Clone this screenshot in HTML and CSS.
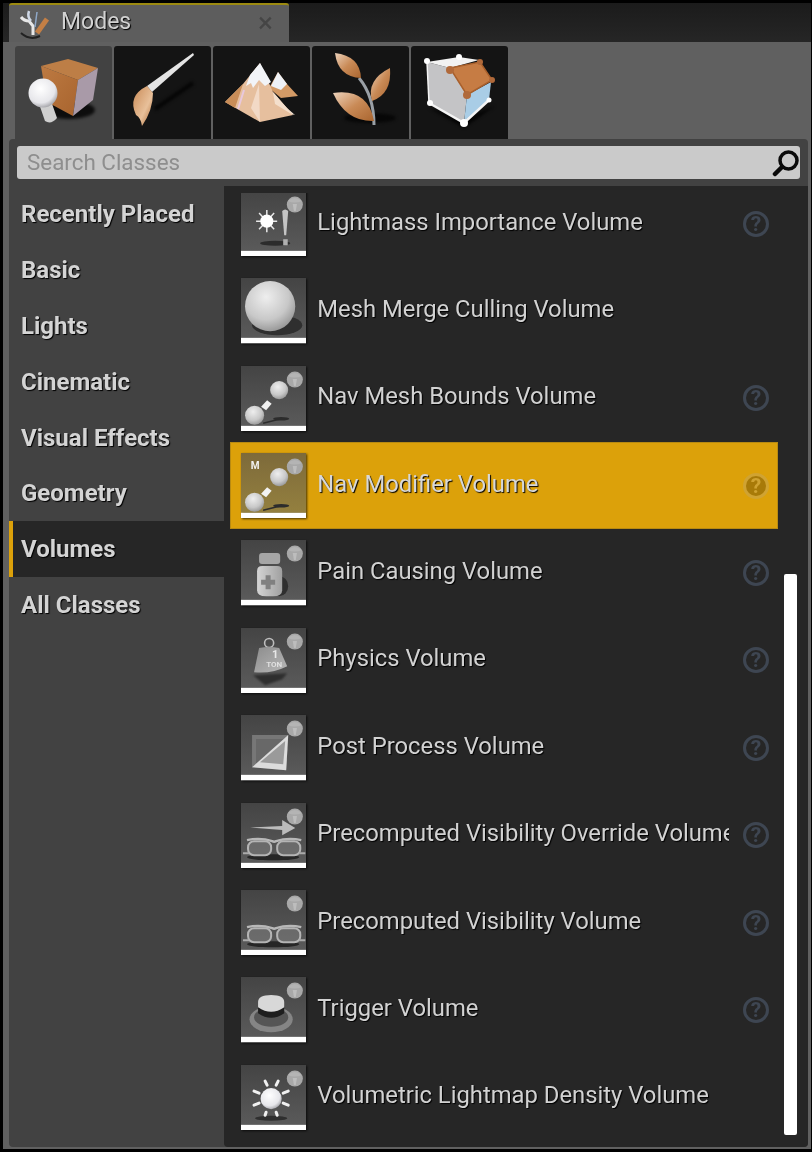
FILE: index.html
```html
<!DOCTYPE html>
<html lang="en">
<head>
<meta charset="utf-8">
<title>Modes</title>
<link rel="stylesheet" href="styles.css">
</head>
<body>
<svg class="defs" width="0" height="0" aria-hidden="true">
  <defs>
    <linearGradient id="thumb" x1="0" y1="0" x2="0" y2="1"><stop offset="0" stop-color="#444"/><stop offset="1" stop-color="#5a5a5a"/></linearGradient>
    <linearGradient id="thumbSel" x1="0" y1="0" x2="0" y2="1"><stop offset="0" stop-color="#7d6a3a"/><stop offset="1" stop-color="#94803f"/></linearGradient>
    <radialGradient id="ball" cx=".42" cy=".32" r=".75"><stop offset="0" stop-color="#eeeeee"/><stop offset=".6" stop-color="#c8c8c8"/><stop offset="1" stop-color="#8d8d8d"/></radialGradient>
    <radialGradient id="white" cx=".42" cy=".35" r=".7"><stop offset="0" stop-color="#fff"/><stop offset=".7" stop-color="#e6e6ea"/><stop offset="1" stop-color="#9a9a9f"/></radialGradient>
    <linearGradient id="leaf" x1="0" y1="0" x2="1" y2="1"><stop offset="0" stop-color="#ecd2bb"/><stop offset=".5" stop-color="#c98a56"/><stop offset="1" stop-color="#a9652f"/></linearGradient>
    <linearGradient id="bristle" x1="0" y1="0" x2="1" y2="1"><stop offset="0" stop-color="#c98a56"/><stop offset=".6" stop-color="#e8c09a"/><stop offset="1" stop-color="#a9652f"/></linearGradient>
    <linearGradient id="cubeFront" x1="0" y1="0" x2="1" y2="1"><stop offset="0" stop-color="#bd7a42"/><stop offset="1" stop-color="#a8642e"/></linearGradient>
    <linearGradient id="bottle" x1="0" y1="0" x2="1" y2="0"><stop offset="0" stop-color="#d4d4d4"/><stop offset="1" stop-color="#a0a0a0"/></linearGradient>
    <linearGradient id="weight" x1="0" y1="0" x2="1" y2="1"><stop offset="0" stop-color="#8c8c8c"/><stop offset="1" stop-color="#b8b8b8"/></linearGradient>
    <symbol id="gem" viewBox="0 0 65 65">
      <circle cx="53.600" cy="13.500" r="8" fill="#a8a8a8"/>
      <path d="M46.500 10 Q53.600 4 60.500 10 Q53.600 13 46.500 10 Z" fill="#b4b4b4"/>
      <path d="M51.500 13 H55.700 L54.500 20 H52.700 Z" fill="#bdbdbd"/>
    </symbol>
    <symbol id="glasses" viewBox="0 0 65 65">
      <ellipse cx="32" cy="54" rx="26" ry="3" fill="#262626"/>
      <path d="M6 37 Q19 34 31 38 Q33 39 35 38 Q47 34 60 37" fill="none" stroke="#b8b8b8" stroke-width="2.400"/>
      <rect x="7" y="38" width="23" height="14" rx="6" fill="#7a7a7a" fill-opacity=".6" stroke="#b4b4b4" stroke-width="2"/>
      <rect x="36" y="38" width="23" height="14" rx="6" fill="#7a7a7a" fill-opacity=".6" stroke="#b4b4b4" stroke-width="2"/>
      <path d="M2 50 H8 M58 50 H64" stroke="#aaa" stroke-width="2"/>
    </symbol>
    <symbol id="nav" viewBox="0 0 65 65">
      <path d="M22 57 L38 53" stroke="#2c2c2c" stroke-width="1.500"/>
      <ellipse cx="40" cy="52.500" rx="8" ry="1.700" fill="#2c2c2c"/>
      <path d="M20 40.500 L26 34 L30.500 37.500 L25 44 Z" fill="#f2f2f2"/>
      <circle cx="38" cy="24" r="9" fill="url(#ball)"/>
      <circle cx="13.500" cy="49" r="9.500" fill="url(#ball)"/>
    </symbol>
  </defs>
</svg>

<main class="frame">
  <header class="tabstrip">
    <div class="doc-tab">
      <svg class="doc-icon" viewBox="0 0 32 30">
        <path d="M3 8 Q6 12 11 12 L15 17 L15 26" fill="none" stroke="#e8e8e8" stroke-width="3"/>
        <path d="M11 2 Q9 8 13 12" fill="none" stroke="#cfd8e6" stroke-width="2.500"/>
        <path d="M19 24 L29 10" stroke="#c47f45" stroke-width="5"/>
        <path d="M19 3 L17 18" stroke="#8fa8c8" stroke-width="1.500"/>
        <path d="M3 24 Q12 32 22 27" fill="none" stroke="#222" stroke-width="2"/>
      </svg>
      <span class="doc-title">Modes</span>
      <span class="doc-close">×</span>
    </div>
  </header>

  <nav class="modes">
    <div class="mode mode-on">
      <svg class="mode-icon" viewBox="0 0 96 92">
        <ellipse class="soft" cx="54" cy="64" rx="26" ry="9" fill="#0d0d0d"/>
        <path d="M26 20 L53 13 L83 22 L63 34 Z" fill="#bd7e46"/>
        <path d="M26 20 L63 34 L58 70 L32 56 Z" fill="url(#cubeFront)"/>
        <path d="M63 34 L83 22 L78 54 L58 70 Z" fill="#a99aa8"/>
        <path d="M22 52 L35 52 L42 72 Q36 79 30 75 Z" fill="#cfcfcf"/>
        <circle cx="28" cy="47" r="14.500" fill="url(#white)"/>
      </svg>
    </div>
    <div class="mode">
      <svg class="mode-icon" viewBox="0 0 96 92">
        <path class="soft" d="M79 37 L41 63" stroke="#050505" stroke-width="4"/>
        <path d="M79 7 L80 9 L38 46 L33 40 Z" fill="#e4e4e4"/>
        <path d="M33 40 L39 47 Q39 64 28 80 Q27 72 22 69 Q13 50 33 40 Z" fill="url(#bristle)"/>
      </svg>
    </div>
    <div class="mode">
      <svg class="mode-icon" viewBox="0 0 96 92">
        <path d="M65 26 L74 38 L85 50 L68 52 L56 42 Z" fill="#d39a66"/>
        <path d="M65 26 L74 38 L68 44 L58 40 Z" fill="#eef1f6"/>
        <path d="M60 50 L82 69 L64 64 Z" fill="#f4e6d8"/>
        <path d="M30 38 L47 17 L60 46 L80 69 L47 76 L12 56 Z" fill="#e6bf9e"/>
        <path d="M47 17 L37 29 L33 40 L38 37 L40 42 L46 34 L52 40 L58 36 Z" fill="#f2f4f8"/>
        <path d="M12 56 L30 38 L22 62 Z" fill="#c98d58"/>
        <path d="M60 46 L80 69 L62 58 Z" fill="#f4dfcc"/>
        <path d="M25 63 L31 44" stroke="#e8c8dc" stroke-width="2"/>
        <path d="M47 76 L46 38 L38 62 Z" fill="#f2d9c6"/>
      </svg>
    </div>
    <div class="mode">
      <svg class="mode-icon" viewBox="0 0 96 92">
        <ellipse class="soft" cx="58" cy="72" rx="26" ry="5" fill="#070707"/>
        <path d="M47 32 Q62 50 62 79" fill="none" stroke="#9aa0a6" stroke-width="3"/>
        <path d="M23 7 Q48 10 49 32 Q26 31 23 7 Z" fill="url(#leaf)"/>
        <path d="M78 22 Q80 48 60 55 Q54 34 78 22 Z" fill="url(#leaf)"/>
        <path d="M21 47 Q56 42 62 75 Q34 76 21 47 Z" fill="url(#leaf)"/>
      </svg>
    </div>
    <div class="mode">
      <svg class="mode-icon" viewBox="0 0 96 92">
        <path class="soft" d="M18 62 L53 82 L84 60 L53 72 Z" fill="#050505"/>
        <path d="M16 16 L39 22 L56 49 L53 77 L18 57 Z" fill="#c4c4c6"/>
        <path d="M56 49 L80 36 L78 54 L53 77 Z" fill="#a9cde6"/>
        <path d="M16 16 L48 11 L68 14 L39 22 Z" fill="#f2f2f2"/>
        <path d="M39 22 L69 16 L81 34 L56 49 Z" fill="#c67c44" stroke="#a9602c" stroke-width="1.500"/>
        <path d="M18 57 L53 77 L78 54" fill="none" stroke="#f4f4f4" stroke-width="2.500"/>
        <path d="M16 16 L18 57" stroke="#f4f4f4" stroke-width="1.500"/>
        <circle cx="39" cy="24" r="4" fill="#b0693a"/><circle cx="69" cy="16" r="3" fill="#b0693a"/><circle cx="81" cy="34" r="3" fill="#b0693a"/><circle cx="56" cy="49" r="4" fill="#b0693a"/>
        <circle cx="16" cy="15" r="3" fill="#fff"/><circle cx="48" cy="11" r="3" fill="#fff"/><circle cx="19" cy="57" r="3" fill="#fff"/><circle cx="53" cy="77" r="4" fill="#fff"/><circle cx="78" cy="54" r="2.500" fill="#fff"/>
      </svg>
    </div>
  </nav>

  <section class="panel">
    <div class="searchrow">
      <div class="search">
        <span class="search-text">Search Classes</span>
        <svg class="search-icon" viewBox="0 0 28 28">
          <circle cx="16.500" cy="11.500" r="8.500" fill="none" stroke="#0a0a0a" stroke-width="3.500"/>
          <path d="M10 18 L3 25" stroke="#0a0a0a" stroke-width="4.500" stroke-linecap="round"/>
        </svg>
      </div>
    </div>
    <div class="browser">
      <aside class="cats">
        <div class="cat">Recently Placed</div>
        <div class="cat">Basic</div>
        <div class="cat">Lights</div>
        <div class="cat">Cinematic</div>
        <div class="cat">Visual Effects</div>
        <div class="cat">Geometry</div>
        <div class="cat cat-on">Volumes</div>
        <div class="cat">All Classes</div>
      </aside>
      <div class="list">
        <div class="scroller">
          <div class="rows">
            <div class="row">
              <svg class="thumb" viewBox="0 0 65 65"><rect width="65" height="59.500" fill="url(#thumb)"/><rect y="59.500" width="65" height="5.500" fill="#fff"/>
                <ellipse cx="34" cy="52" rx="15" ry="2.500" fill="#2c2c2c"/>
                <g stroke="#e8e8e8" stroke-width="1.500"><path d="M25.700 19 V41 M15 30 H36 M18 22 L33 38 M33 22 L18 38"/></g>
                <circle cx="25.700" cy="30" r="6.500" fill="#fff"/>
                <path d="M41 20 Q44 17 47 20 L45 44 H43 Z" fill="#c4c4c4"/><rect x="42" y="48" width="4.500" height="6" fill="#b0b0b0"/>
                <use href="#gem" width="65" height="65"/></svg>
              <span class="name">Lightmass Importance Volume</span><span class="help">?</span>
            </div>
            <div class="row">
              <svg class="thumb" viewBox="0 0 65 65"><rect width="65" height="59.500" fill="url(#thumb)"/><rect y="59.500" width="65" height="5.500" fill="#fff"/>
                <ellipse cx="36" cy="47" rx="25" ry="10" fill="#2f2f2f"/>
                <circle cx="29" cy="28" r="25" fill="url(#ball)"/></svg>
              <span class="name">Mesh Merge Culling Volume</span>
            </div>
            <div class="row">
              <svg class="thumb" viewBox="0 0 65 65"><rect width="65" height="59.500" fill="url(#thumb)"/><rect y="59.500" width="65" height="5.500" fill="#fff"/>
                <use href="#nav" width="65" height="65"/><use href="#gem" width="65" height="65"/></svg>
              <span class="name">Nav Mesh Bounds Volume</span><span class="help">?</span>
            </div>
            <div class="row row-on">
              <svg class="thumb" viewBox="0 0 65 65"><rect width="65" height="59.500" fill="url(#thumbSel)"/><rect y="59.500" width="65" height="5.500" fill="#fff"/>
                <use href="#nav" width="65" height="65"/><use href="#gem" width="65" height="65"/>
                <text class="thumb-m" x="14" y="16">M</text></svg>
              <span class="name">Nav Modifier Volume</span><span class="help">?</span>
            </div>
            <div class="row">
              <svg class="thumb" viewBox="0 0 65 65"><rect width="65" height="59.500" fill="url(#thumb)"/><rect y="59.500" width="65" height="5.500" fill="#fff"/>
                <ellipse cx="38" cy="46" rx="9" ry="10" fill="#2f2f2f"/>
                <path d="M16 31 Q16 26 21 26 H36 Q41 26 41 31 V50 Q41 56 32 56 H25 Q16 56 16 50 Z" fill="url(#bottle)"/>
                <rect x="18" y="13" width="21" height="11" rx="3" fill="#a6a6a6"/>
                <path d="M24.500 35 H29.500 V39.500 H34 V44.500 H29.500 V49 H24.500 V44.500 H20 V39.500 H24.500 Z" fill="#808080"/>
                <use href="#gem" width="65" height="65"/></svg>
              <span class="name">Pain Causing Volume</span><span class="help">?</span>
            </div>
            <div class="row">
              <svg class="thumb" viewBox="0 0 65 65"><rect width="65" height="59.500" fill="url(#thumb)"/><rect y="59.500" width="65" height="5.500" fill="#fff"/>
                <path class="soft-s" d="M12 47 L46 45 L41 51 L24 57 Z" fill="#2e2e2e"/>
                <circle cx="28" cy="15" r="4.500" fill="none" stroke="#bdbdbd" stroke-width="1.600"/>
                <path d="M18 20 Q28 18 38 20 L46 38 Q30 46 13 44 Z" fill="url(#weight)"/>
                <text class="thumb-one" x="34" y="30">1</text><text class="thumb-ton" x="33" y="39">TON</text>
                <use href="#gem" width="65" height="65"/></svg>
              <span class="name">Physics Volume</span><span class="help">?</span>
            </div>
            <div class="row">
              <svg class="thumb" viewBox="0 0 65 65"><rect width="65" height="59.500" fill="url(#thumb)"/><rect y="59.500" width="65" height="5.500" fill="#fff"/>
                <path d="M11 20 H47 L45 55 L11 52 Z" fill="#777"/>
                <path d="M15 24 H44 L18 48 H15 Z" fill="#686868"/>
                <path d="M47 20 L45 55 L11 52 Z" fill="#dcdcdc"/>
                <path d="M44 26 L42 49 L19 47 Z" fill="#9a9a9a"/>
                <use href="#gem" width="65" height="65"/></svg>
              <span class="name">Post Process Volume</span><span class="help">?</span>
            </div>
            <div class="row">
              <svg class="thumb" viewBox="0 0 65 65"><rect width="65" height="59.500" fill="url(#thumb)"/><rect y="59.500" width="65" height="5.500" fill="#fff"/>
                <path d="M9 24.500 L41 23 V17 L54 25 L41 32 V27 Z" fill="#bcbcbc"/>
                <use href="#glasses" width="65" height="65"/><use href="#gem" width="65" height="65"/></svg>
              <span class="name">Precomputed Visibility Override Volume</span><span class="help">?</span>
            </div>
            <div class="row">
              <svg class="thumb" viewBox="0 0 65 65"><rect width="65" height="59.500" fill="url(#thumb)"/><rect y="59.500" width="65" height="5.500" fill="#fff"/>
                <use href="#glasses" width="65" height="65"/><use href="#gem" width="65" height="65"/></svg>
              <span class="name">Precomputed Visibility Volume</span><span class="help">?</span>
            </div>
            <div class="row">
              <svg class="thumb" viewBox="0 0 65 65"><rect width="65" height="59.500" fill="url(#thumb)"/><rect y="59.500" width="65" height="5.500" fill="#fff"/>
                <ellipse cx="30" cy="42" rx="21.500" ry="13" fill="#858585"/>
                <ellipse cx="30" cy="40" rx="17" ry="9.500" fill="#555"/>
                <path d="M17 29 V36 Q30 45 43 36 V29 Z" fill="#1e1e1e"/>
                <path d="M17 25 Q17 18 30 18 Q43 18 43 25 V30 Q30 39 17 30 Z" fill="#d8d8d8"/>
                <use href="#gem" width="65" height="65"/></svg>
              <span class="name">Trigger Volume</span><span class="help">?</span>
            </div>
            <div class="row">
              <svg class="thumb" viewBox="0 0 65 65"><rect width="65" height="59.500" fill="url(#thumb)"/><rect y="59.500" width="65" height="5.500" fill="#fff"/>
                <ellipse cx="30" cy="53" rx="16" ry="2.500" fill="#2f2f2f"/>
                <g stroke="#f0f0f0" stroke-width="3" stroke-linecap="round"><path d="M24 16 L26 20 M37 16 L35 20 M13 26 L18 28 M47 26 L42 28 M13 40 L18 38 M47 40 L42 38 M24 50 L25 47 M36 50 L35 47"/></g>
                <circle cx="30" cy="33.500" r="10.500" fill="url(#white)"/>
                <use href="#gem" width="65" height="65"/></svg>
              <span class="name">Volumetric Lightmap Density Volume</span>
            </div>
          </div>
        </div>
        <div class="scrollbar"></div>
      </div>
    </div>
  </section>
</main>
</body>
</html>
```

FILE: styles.css
```css
* { box-sizing: border-box; }
html, body { margin: 0; height: 100%; background: #000; }
body { font-family: Roboto, "Liberation Sans", sans-serif; overflow: hidden; }
.defs { position: absolute; }
.soft { filter: blur(1.5px); }
.soft-s { filter: blur(1px); }

.frame {
  width: 808px;
  height: 1146px;
  margin: 3px 0 0 3px;
  background: #606060;
  display: flex;
  flex-direction: column;
  filter: blur(.7px);
}

.tabstrip {
  height: 39px;
  flex: none;
  padding-left: 6px;
  background: linear-gradient(#1b1b1b, #262626);
  display: flex;
}
.doc-tab {
  width: 280px;
  background: #5d5d5d;
  border-top: 2px solid #9c8a10;
  border-radius: 3px 3px 0 0;
  display: flex;
  align-items: center;
  padding: 0 16px 4px 9px;
}
.doc-icon { width: 32px; height: 30px; flex: none; margin-bottom: -4px; }
.doc-title {
  margin-left: 11px;
  font-size: 23px;
  color: #d2d2d2;
  text-shadow: 1px 1px 1px #000;
}
.doc-close { margin-left: auto; margin-bottom: -3px; font-size: 28px; line-height: 28px; color: #454545; }

.modes {
  flex: none;
  height: 97px;
  padding: 4px 0 0 12px;
  display: flex;
  gap: 2.5px;
}
.mode {
  width: 96.500px;
  background: #141414;
  border-radius: 3px 3px 0 0;
}
.mode-on { background: #424242; }
.mode-icon { display: block; width: 96px; height: 92px; }

.panel {
  flex: 1;
  margin: 0 3px 2px 6px;
  min-height: 0;
  background: #424242;
  border-radius: 4px;
  display: flex;
  flex-direction: column;
}
.searchrow { flex: none; padding: 7px 8px 7px 8px; }
.search {
  height: 33px;
  background: #cacaca;
  border-radius: 3px;
  display: flex;
  align-items: center;
  padding: 0 0 2px 10px;
  font-size: 22.400px;
}
.search-text { color: #8e8e8e; }
.search-icon { width: 28px; height: 28px; margin: 2px 0 0 auto; }

.browser { flex: 1; min-height: 0; display: flex; }
.cats { width: 215px; flex: none; padding-left: 0; }
.cat {
  height: 55.800px;
  display: flex;
  align-items: center;
  padding: 1px 0 0 12px;
  font-size: 24px;
  font-weight: 700;
  color: #d4d4d4;
  text-shadow: 1px 1px 1px #000;
}
.cat-on {
  background: #262626;
  box-shadow: inset 4px 0 0 #dca10a;
}

.list {
  flex: 1;
  min-width: 0;
  background: #262626;
  border-radius: 0 0 4px 4px;
  padding: 7px 0 5px 6px;
  display: flex;
}
.scroller { width: 548px; flex: none; overflow: hidden; }
.rows { margin-top: -13.200px; display: grid; grid-auto-rows: 87.400px; }
.row {
  display: flex;
  align-items: center;
  padding: 0 9px 0 11px;
  font-size: 23.800px;
  color: #d2d2d2;
  text-shadow: 1px 1px 1px #000;
}
.row-on {
  background: #dca10a;
  box-shadow: inset 0 0 0 1px #b88a12;
  color: #d8d8d8;
}
.thumb {
  width: 65.300px;
  height: 65.300px;
  flex: none;
  filter: drop-shadow(1px 1px 1px rgba(0, 0, 0, .7));
}
.name {
  margin-left: 11px;
  margin-bottom: 4px;
  width: 411.700px;
  flex: none;
  overflow: hidden;
  white-space: nowrap;
}
.help {
  margin-left: 14px;
  width: 26px;
  height: 26px;
  flex: none;
  border: 3px solid #3e4652;
  border-radius: 50%;
  display: flex;
  align-items: center;
  justify-content: center;
  font-size: 21px;
  font-weight: 700;
  color: #3e4652;
  text-shadow: none;
}
.row-on .help {
  background: #a87a08;
  border-color: #d0a332;
  color: #d0a332;
}
.thumb-m { font: 700 10px Roboto, sans-serif; fill: #f2f2f2; text-anchor: middle; text-shadow: none; }
.thumb-one { font: 700 11px Roboto, sans-serif; fill: #e8e8e8; text-anchor: middle; text-shadow: none; }
.thumb-ton { font: 700 8px Roboto, sans-serif; fill: #e0e0e0; text-anchor: middle; text-shadow: none; }

.scrollbar {
  width: 13px;
  height: 561px;
  margin: 381px 0 0 6px;
  flex: none;
  background: #fff;
  border-radius: 2px;
}
```
